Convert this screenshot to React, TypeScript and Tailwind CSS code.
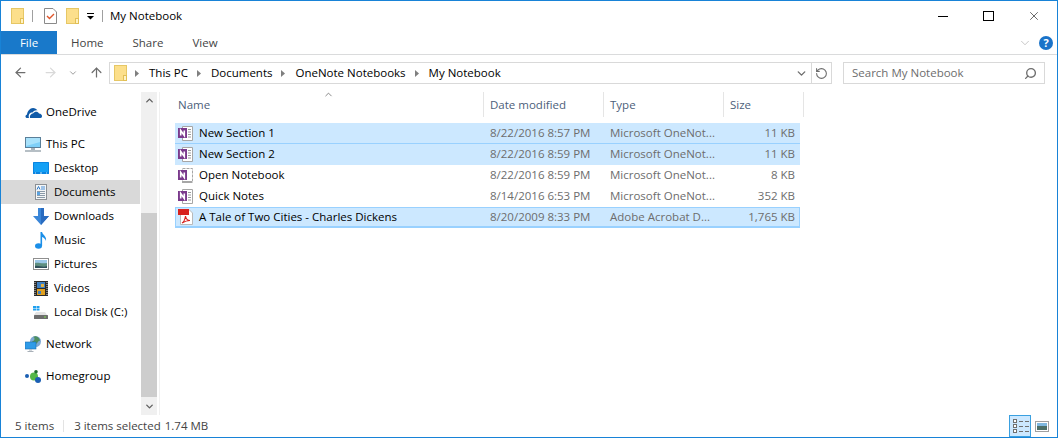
import { ArrowLeft, ArrowRight, ArrowUp, ChevronDown, ChevronUp, RotateCcw, Search, X } from 'lucide-react';
import type { ReactNode } from 'react';

const Folder = ({ className = '' }: { className?: string }) => (
  <svg width="13" height="16" viewBox="0 0 13 16" className={className}>
    <rect x="0.5" y="0.5" width="12" height="15" fill="#fcdf8b" stroke="#e6c765" />
    <rect x="9.5" y="10.5" width="3" height="5" fill="#fff3c4" stroke="#e2bf55" />
  </svg>
);

const OneNoteIcon = ({ open }: { open?: boolean }) => (
  <svg width="16" height="15" viewBox="0 0 16 15" className="shrink-0">
    <path d="M4.5 .5H14.500V14.500H4.500Z" fill={open ? 'none' : '#fff'} stroke="#a6a6a6" strokeDasharray={open ? '3 1' : undefined} />
    {!open && <path d="M10 3.500h3M10 6h3M10 8.500h3M10 11h3" stroke="#9a9a9a" />}
    {open && <path d="M4 14h10" stroke="#a6a6a6" strokeWidth="2" />}
    <rect x="0" y="2" width="9" height="10" fill="#7a3a8c" />
    <path d="M2.700 9.500v-5l3.600 5v-5" fill="none" stroke="#fff" strokeWidth="1.600" />
  </svg>
);

const PdfIcon = () => (
  <svg width="16" height="16" viewBox="0 0 16 16" className="shrink-0">
    <path d="M2.500 .5H11L14.500 4V15.500H2.500Z" fill="#fff" stroke="#b9b9b9" />
    <rect x="0" y="0" width="11" height="6" fill="#d8211d" />
    <path d="M4 14c2-1 3-4 3.500-7 .5 3 2 4.500 4.500 4.500-3 0-5.500 1-8 2.500Z" fill="none" stroke="#d8211d" strokeWidth="1.100" />
  </svg>
);

const OneDriveIcon = () => (
  <svg width="17" height="11" viewBox="0 0 17 11">
    <path d="M1.500 11C0 10.500 0 8 2 7.500 2.500 4 5 1 8 1c2 0 3.500 1 4.500 2.500C11 3 9 3.500 7.500 5.500 5 5 3 7.500 4 11Z" fill="#0f5aa8" />
    <path d="M5 11C4.500 8 6.500 6.500 8 6.500 9.500 4 13 4 14 6.500c2 0 3 1.500 3 2.500s-.5 2-1.500 2Z" fill="#0f5aa8" />
  </svg>
);

const MonitorIcon = () => (
  <svg width="16" height="15" viewBox="0 0 16 15">
    <rect x="0.5" y="0.5" width="15" height="10" fill="#7fd0f8" stroke="#5a7f99" />
    <path d="M1 1h14v4L1 9Z" fill="#a9e2fb" />
    <rect x="6" y="11" width="4" height="2" fill="#a8b4bc" />
    <rect x="0" y="13" width="16" height="2" fill="#b6bfc5" />
  </svg>
);

const DesktopIcon = () => (
  <svg width="16" height="12" viewBox="0 0 16 12">
    <rect x="0" y="0" width="16" height="12" rx="0.5" fill="#0a84e0" />
    <rect x="1" y="1" width="14" height="9" fill="#14a0f5" />
    <path d="M2 11h1M7 11h2M13 11h1" stroke="#bfe3fb" />
  </svg>
);

const DocumentsIcon = () => (
  <svg width="12" height="16" viewBox="0 0 12 16" className="ml-[2px]">
    <rect x="0.5" y="0.5" width="11" height="15" fill="#f4f6f7" stroke="#8b8f93" />
    <path d="M6 3h4M6 5h4" stroke="#4a90d9" />
    <path d="M2 5.500 3.500 2.500 5 5.500" fill="none" stroke="#2b78c8" />
    <path d="M2 7.500h8M2 9.500h8M2 11.500h8M2 13.500h8" stroke="#8a9aa8" />
    <rect x="2" y="8" width="3" height="3" fill="#5aa2e0" />
  </svg>
);

const DownloadsIcon = () => (
  <svg width="16" height="17" viewBox="0 0 16 17">
    <path d="M5 0h6v8h5L8 17 0 8h5Z" fill="#3a86d8" />
    <path d="M8 0h3v8h5L8 17Z" fill="#2a6cc0" />
  </svg>
);

const MusicIcon = () => (
  <svg width="12" height="17" viewBox="0 0 12 17" className="ml-[2px]">
    <ellipse cx="3.500" cy="14" rx="3.500" ry="2.800" fill="#1b8fe8" />
    <path d="M5.500 0h1.600c.3 3 4.900 4 3.900 9-.5-2-2.500-3.500-3.900-4V14H5.500Z" fill="#1b8fe8" />
  </svg>
);

const PicturesIcon = () => (
  <svg width="16" height="12" viewBox="0 0 16 12">
    <rect x="0.500" y="0.500" width="15" height="11" fill="#fff" stroke="#8f8f8f" />
    <rect x="2" y="2" width="12" height="4" fill="#9cc8e8" />
    <path d="M2 5c3-1 6 1 12 0v5H2Z" fill="#5f8f80" />
    <path d="M2 8c4-1 8 2 12 0v2H2Z" fill="#31505a" />
  </svg>
);

const VideosIcon = () => (
  <svg width="14" height="15" viewBox="0 0 14 15" className="ml-px">
    <rect x="0" y="0" width="14" height="15" fill="#2a2a2a" />
    <path d="M1 1v13M13 1v13" stroke="#d9d9d9" strokeDasharray="1 1" />
    <rect x="3" y="1" width="8" height="6" fill="#3f7fc0" />
    <rect x="3" y="8" width="8" height="6" fill="#e0a020" />
    <rect x="7" y="3" width="3" height="3" fill="#e3b040" />
    <rect x="4" y="10" width="3" height="3" fill="#3f7fc0" />
  </svg>
);

const DiskIcon = () => (
  <svg width="15" height="13" viewBox="0 0 15 13">
    <path d="M0 0h3v2H0ZM3.500 0h3v2h-3ZM0 2.500h3v2H0ZM3.500 2.500h3v2h-3Z" fill="#1fa0ef" />
    <path d="M3 6h9l2 3H1Z" fill="#e4e4e4" />
    <rect x="1" y="9" width="14" height="4" rx="0.500" fill="#6d6d6d" />
    <rect x="11" y="10.500" width="2" height="1" fill="#7ee04a" />
  </svg>
);

const NetworkIcon = () => (
  <svg width="16" height="16" viewBox="0 0 16 16">
    <circle cx="10.500" cy="5.500" r="5.500" fill="#7fa9d4" />
    <path d="M8 1c2 0 2 3 0 4s-1 3 2 3 3-4 5-3C15 2 11-1 8 1Z" fill="#4f8f5f" />
    <rect x="0" y="6" width="11" height="7" fill="#2f9be8" stroke="#1d6fb0" strokeWidth="0.600" />
    <path d="M4 14h3M2.500 15.500h6" stroke="#a8b0b8" />
  </svg>
);

const HomegroupIcon = () => (
  <svg width="16" height="13" viewBox="0 0 16 13">
    <circle cx="2" cy="6" r="2" fill="#1b5fb3" />
    <circle cx="9" cy="6.500" r="4" fill="#54b848" />
    <circle cx="11" cy="1.800" r="1.800" fill="#1f6d2e" />
    <circle cx="13" cy="10" r="3" fill="#1b5fb3" />
  </svg>
);

function NavItem({ icon, label, active, top }: { icon: ReactNode; label: string; active?: boolean; top?: boolean }) {
  return (
    <div className={`flex h-6 items-center ${top ? 'pl-[24px]' : 'pl-[32px]'} ${active ? 'bg-[#d9d9d9]' : ''}`}>
      <span className="flex w-[21px] shrink-0 items-center justify-start">{icon}</span>
      <span className="text-[#000]">{label}</span>
    </div>
  );
}

type Row = { name: string; date: string; type: string; size: string; look: string; icon: ReactNode };

const rows: Row[] = [
  { name: 'New Section 1', date: '8/22/2016 8:57 PM', type: 'Microsoft OneNot...', size: '11 KB', look: 'border-[#99d1ff] bg-[#cce8ff]', icon: <OneNoteIcon /> },
  { name: 'New Section 2', date: '8/22/2016 8:59 PM', type: 'Microsoft OneNot...', size: '11 KB', look: 'border-transparent bg-[#cce8ff]', icon: <OneNoteIcon /> },
  { name: 'Open Notebook', date: '8/22/2016 8:59 PM', type: 'Microsoft OneNot...', size: '8 KB', look: 'border-transparent', icon: <OneNoteIcon open /> },
  { name: 'Quick Notes', date: '8/14/2016 6:53 PM', type: 'Microsoft OneNot...', size: '352 KB', look: 'border-transparent', icon: <OneNoteIcon /> },
  { name: 'A Tale of Two Cities - Charles Dickens', date: '8/20/2009 8:33 PM', type: 'Adobe Acrobat D...', size: '1,765 KB', look: 'border-[#99d1ff] bg-[#cce8ff] shadow-[inset_0_0_0_1px_#99d1ff]', icon: <PdfIcon /> },
];

const Crumb = ({ children }: { children: ReactNode }) => (
  <>
    <svg width="4" height="7" viewBox="0 0 4 7" className="ml-[9px] mr-[10px] shrink-0"><path d="M0 0l4 3.500L0 7Z" fill="#7f7f7f" /></svg>
    <span className="text-black">{children}</span>
  </>
);

export default function App() {
  return (
    <div className="flex h-[438px] w-[1058px] flex-col overflow-hidden border border-[#1883d7] bg-white text-[11.5px] leading-none [font-family:'Open_Sans',sans-serif]">
      {/* title bar */}
      <div className="flex h-[30px] shrink-0 items-center">
        <Folder className="ml-[10px]" />
        <span className="ml-[8px] h-[12px] w-px bg-[#a0a0a0]" />
        <svg width="13" height="16" viewBox="0 0 13 16" className="ml-[11px]">
          <path d="M.5.5H9L12.500 4V15.500H.5Z" fill="#fff" stroke="#8a8a8a" />
          <path d="M3 8l2.500 2.500L10 6" fill="none" stroke="#e0552a" strokeWidth="1.400" />
        </svg>
        <Folder className="ml-[9px]" />
        <svg width="7" height="7" viewBox="0 0 7 7" className="ml-[8px]">
          <path d="M0 .5h7" stroke="#000" />
          <path d="M0 3h7L3.500 6.500Z" fill="#000" />
        </svg>
        <span className="ml-[8px] h-[12px] w-px bg-[#a0a0a0]" />
        <span className="ml-[7px] text-[#000]">My Notebook</span>
        <div className="ml-auto flex items-center">
          <span className="h-px w-[10px] bg-black" />
          <span className="ml-[35px] h-[10px] w-[11px] border border-black" />
          <X size={14} strokeWidth={1} className="ml-[33px] mr-[16px] text-black" />
        </div>
      </div>

      {/* ribbon tabs */}
      <div className="flex h-[24px] shrink-0 items-center border-b border-[#dadbdc]">
        <div className="flex h-[23px] w-[56px] items-center justify-center bg-[#1979ca] text-white">File</div>
        <span className="ml-[14px] text-[#444]">Home</span>
        <span className="ml-[29px] text-[#444]">Share</span>
        <span className="ml-[29px] text-[#444]">View</span>
        <ChevronDown size={14} strokeWidth={1} className="ml-auto text-[#a0a0a0]" />
        <span className="ml-[7px] mr-[4px] flex h-[14px] w-[14px] items-center justify-center rounded-full bg-[#1a73c9] text-[11px] font-bold text-white">?</span>
      </div>

      {/* address row */}
      <div className="flex h-[37px] shrink-0 items-start pt-[7px]">
        <ArrowLeft size={15} strokeWidth={2} className="ml-[12px] mt-[3px] text-[#6d6d6d]" />
        <ArrowRight size={15} strokeWidth={2} className="ml-[15px] mt-[3px] text-[#d9d9d9]" />
        <ChevronDown size={10} strokeWidth={2} className="ml-[10px] mt-[6px] text-[#8a8a8a]" />
        <ArrowUp size={15} strokeWidth={2} className="ml-[11px] mt-[3px] text-[#6d6d6d]" />
        <div className="ml-[5px] flex h-[22px] w-[723px] items-center border border-[#d9d9d9]">
          <Folder className="ml-[4px] mr-[-1px] shrink-0" />
          <Crumb>This PC</Crumb>
          <Crumb>Documents</Crumb>
          <Crumb>OneNote Notebooks</Crumb>
          <Crumb>My Notebook</Crumb>
          <ChevronDown size={13} strokeWidth={2.5} className="ml-auto mr-[3px] text-[#6d6d6d]" />
          <div className="flex h-full w-[20px] items-center justify-center border-l border-[#d9d9d9]">
            <RotateCcw size={13} strokeWidth={2} className="text-[#6d6d6d]" />
          </div>
        </div>
        <div className="ml-[11px] flex h-[22px] w-[202px] items-center justify-between border border-[#d9d9d9] pl-[8px] pr-[7px] text-[#6d6d6d]">
          <span>Search My Notebook</span>
          <Search size={13} strokeWidth={2.5} className="-scale-x-100 text-[#6d6d6d]" />
        </div>
      </div>

      {/* body */}
      <div className="flex min-h-0 flex-1">
        <div className="mr-px w-[139px] shrink-0 pt-[8px]">
          <NavItem top icon={<OneDriveIcon />} label="OneDrive" />
          <div className="h-[8px]" />
          <NavItem top icon={<MonitorIcon />} label="This PC" />
          <NavItem icon={<DesktopIcon />} label="Desktop" />
          <NavItem active icon={<DocumentsIcon />} label="Documents" />
          <NavItem icon={<DownloadsIcon />} label="Downloads" />
          <NavItem icon={<MusicIcon />} label="Music" />
          <NavItem icon={<PicturesIcon />} label="Pictures" />
          <NavItem icon={<VideosIcon />} label="Videos" />
          <NavItem icon={<DiskIcon />} label="Local Disk (C:)" />
          <div className="h-[8px]" />
          <NavItem top icon={<NetworkIcon />} label="Network" />
          <div className="h-[8px]" />
          <NavItem top icon={<HomegroupIcon />} label="Homegroup" />
        </div>

        {/* nav scrollbar */}
        <div className="flex w-[16px] shrink-0 flex-col bg-[#f0f0f0]">
          <div className="flex h-[17px] items-center justify-center">
            <ChevronUp size={11} strokeWidth={3} className="text-[#606060]" />
          </div>
          <div className="h-[104px]" />
          <div className="flex-1 bg-[#cdcdcd]" />
          <div className="flex h-[18px] items-center justify-center">
            <ChevronDown size={11} strokeWidth={3} className="text-[#606060]" />
          </div>
        </div>
        <div className="ml-[2px] w-px shrink-0 bg-[#f0f0f0]" />

        {/* file list */}
        <div className="relative min-w-0 flex-1 pl-[15px]">
          <ChevronUp size={11} strokeWidth={1.5} className="absolute left-[163px] top-[-3px] text-[#555]" />
          <div className="flex h-[25px] w-[630px] items-center text-[#4c607a]">
            <div className="flex h-full w-[309px] items-center border-r border-[#e5e5e5] pl-[3px]">Name</div>
            <div className="flex h-full w-[120px] items-center border-r border-[#e5e5e5] pl-[6px]">Date modified</div>
            <div className="flex h-full w-[120px] items-center border-r border-[#e5e5e5] pl-[6px]">Type</div>
            <div className="flex h-full w-[80px] items-center border-r border-[#e5e5e5] pl-[6px]">Size</div>
          </div>
          <div className="mt-[6px] w-[625px]">
            {rows.map((r) => (
              <div key={r.name} className={`flex h-[21px] items-center border-b ${r.look}`}>
                <div className="flex w-[309px] items-center gap-[5px] pl-[3px] text-black">
                  {r.icon}
                  <span>{r.name}</span>
                </div>
                <div className="w-[120px] pl-[6px] text-[#6d6d6d]">{r.date}</div>
                <div className="w-[120px] pl-[6px] text-[#6d6d6d]">{r.type}</div>
                <div className="w-[74px] pr-[3px] text-right text-[#6d6d6d]">{r.size}</div>
              </div>
            ))}
          </div>
        </div>
      </div>

      {/* status bar */}
      <div className="flex h-[22px] shrink-0 items-center pl-[14px] text-[#444]">
        <span>5 items</span>
        <span className="ml-[9px] h-[12px] w-px bg-[#e3e3e3]" />
        <span className="ml-[10px]">3 items selected</span>
        <span className="ml-[4px]">1.74 MB</span>
        <div className="ml-auto flex items-center">
          <div className="flex h-[22px] w-[22px] flex-col items-start justify-center gap-[1px] border border-[#3aa0e0] bg-[#cce8ff] pl-[3px]">
            {[0, 1, 2].map((i) => (
              <div key={i} className="flex items-center gap-[2px]">
                <span className="h-[4px] w-[4px] border border-[#707070] bg-white" />
                <span className="h-px w-[4px] bg-[#707070]" />
                <span className="h-px w-[4px] bg-[#707070]" />
              </div>
            ))}
          </div>
          <svg width="14" height="11" viewBox="0 0 14 11" className="ml-[4px] mr-[8px]">
            <rect x=".5" y=".5" width="13" height="10" fill="#fff" stroke="#a0a0a0" />
            <rect x="2" y="2" width="10" height="3" fill="#7fb8e0" />
            <rect x="2" y="5" width="10" height="4" fill="#4c6f68" />
          </svg>
        </div>
      </div>
    </div>
  );
}
